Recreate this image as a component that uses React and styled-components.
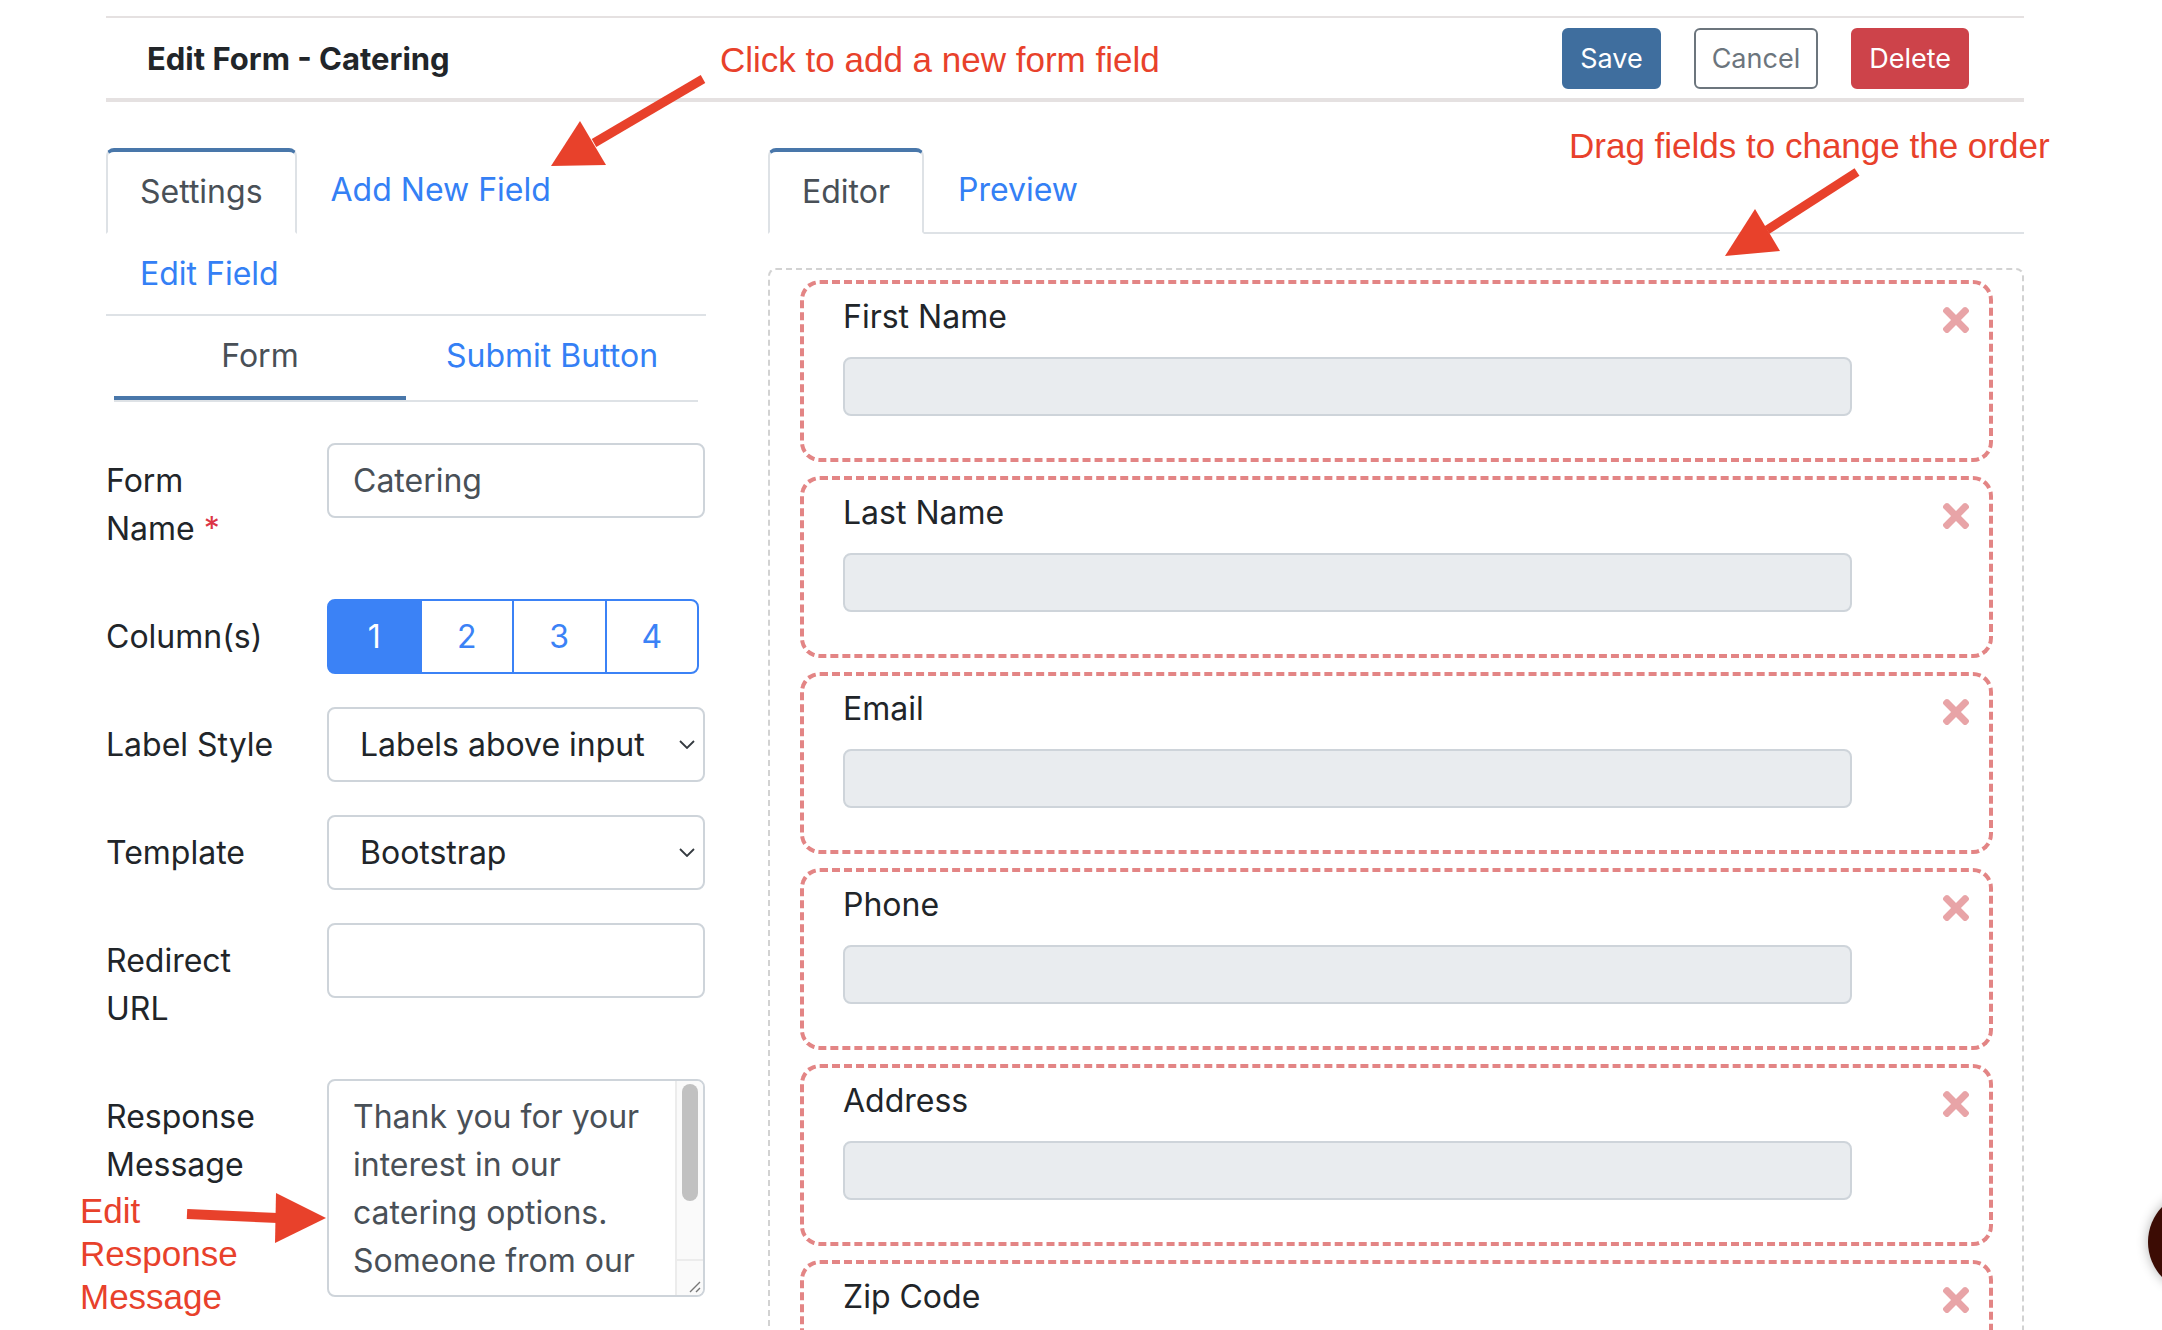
import React from "react";
import styled, { createGlobalStyle, css } from "styled-components";
import { FaTimes } from "react-icons/fa";

const GlobalStyle = createGlobalStyle`
  html, body {
    margin: 0;
    padding: 0;
    overflow: hidden;
    background: #fff;
  }
  body {
    font-family: Inter, "Noto Sans", sans-serif;
    color: #212529;
  }
  * {
    box-sizing: border-box;
  }
`;

const fields = ["First Name", "Last Name", "Email", "Phone", "Address", "Zip Code"];

const message =
  "Thank you for your interest in our catering options. Someone from our team will be in touch with you shortly to discuss the details of your event.";

const App = () => {
  return (
    <Page>
      <GlobalStyle />
      <Container>
        <Header>
          <Title>Edit Form - Catering</Title>
          <Actions>
            <Btn $variant="save">Save</Btn>
            <Btn $variant="cancel">Cancel</Btn>
            <Btn $variant="delete">Delete</Btn>
          </Actions>
        </Header>

        <Body>
          {/* Left: settings */}
          <section>
            <Tabs>
              <Tab $active>Settings</Tab>
              <Tab>Add New Field</Tab>
              <Tab>Edit Field</Tab>
            </Tabs>
            <SubTabs>
              <SubTab $active>Form</SubTab>
              <SubTab>Submit Button</SubTab>
            </SubTabs>

            <Form>
              <Row>
                <Label>
                  Form
                  <br />
                  Name <Required>*</Required>
                </Label>
                <Input defaultValue="Catering" />
              </Row>
              <Row>
                <Label>Column(s)</Label>
                <ColGroup>
                  {[1, 2, 3, 4].map((n) => (
                    <ColBtn key={n} $active={n === 1}>
                      {n}
                    </ColBtn>
                  ))}
                </ColGroup>
              </Row>
              <Row>
                <Label>Label Style</Label>
                <SelectWrap>
                  <Select defaultValue="above">
                    <option value="above">Labels above input</option>
                    <option value="left">Labels left of input</option>
                  </Select>
                  <Chevron />
                </SelectWrap>
              </Row>
              <Row>
                <Label>Template</Label>
                <SelectWrap>
                  <Select defaultValue="bootstrap">
                    <option value="bootstrap">Bootstrap</option>
                    <option value="plain">Plain</option>
                  </Select>
                  <Chevron />
                </SelectWrap>
              </Row>
              <Row>
                <Label>
                  Redirect
                  <br />
                  URL
                </Label>
                <Input defaultValue="" />
              </Row>
              <Row>
                <Label>
                  Response
                  <br />
                  Message
                </Label>
                <TextWrap>
                  <TextArea defaultValue={message} />
                  <ScrollTrack>
                    <ScrollThumb />
                    <ScrollCorner>
                      <svg width="16" height="16" viewBox="0 0 16 16">
                        <path d="M15 5L5 15M15 11l-4 4" stroke="#777" strokeWidth="1.4" fill="none" />
                      </svg>
                    </ScrollCorner>
                  </ScrollTrack>
                </TextWrap>
              </Row>
            </Form>
          </section>

          {/* Right: editor */}
          <section>
            <Tabs>
              <Tab $active>Editor</Tab>
              <Tab>Preview</Tab>
            </Tabs>
            <DropZone>
              {fields.map((f) => (
                <FieldCard key={f}>
                  <CardHead>
                    <FieldLabel>{f}</FieldLabel>
                    <Remove>
                      <FaTimes />
                    </Remove>
                  </CardHead>
                  <CardInput disabled />
                </FieldCard>
              ))}
            </DropZone>
          </section>
        </Body>
      </Container>

      {/* annotations */}
      <Note $left={720} $top={38}>Click to add a new form field</Note>
      <Note $left={1569} $top={124}>Drag fields to change the order</Note>
      <Note $left={80} $top={1189}>
        Edit
        <br />
        Response
        <br />
        Message
      </Note>
      <Arrows width="2162" height="1330" viewBox="0 0 2162 1330">
        <line x1="703" y1="79" x2="594" y2="143" stroke="#e8412b" strokeWidth="9" />
        <polygon points="551,166 580,121 606,165" fill="#e8412b" />
        <line x1="1857" y1="172" x2="1767" y2="230" stroke="#e8412b" strokeWidth="9" />
        <polygon points="1725,256 1755,209 1780,251" fill="#e8412b" />
        <line x1="187" y1="1214" x2="278" y2="1218" stroke="#e8412b" strokeWidth="10" />
        <polygon points="276,1193 326,1218 275,1243" fill="#e8412b" />
      </Arrows>

      <ChatBubble />
    </Page>
  );
};

const Chevron = () => (
  <ChevronIcon viewBox="0 0 16 9" width="16" height="9">
    <path d="M1 1l7 7 7-7" fill="none" stroke="#343a40" strokeWidth="1.8" />
  </ChevronIcon>
);

// Styled Components
const Page = styled.div`
  position: relative;
  width: 2162px;
  height: 1330px;
  overflow: hidden;
  padding: 16px 0 0 106px;
`;

const Container = styled.div`
  width: 1918px;
`;

const Header = styled.header`
  display: flex;
  align-items: center;
  justify-content: space-between;
  height: 86px;
  border-top: 2px solid #e5e1e1;
  border-bottom: 4px solid #e5e1e1;
  padding: 0 55px 0 41px;
`;

const Title = styled.h1`
  margin: 0;
  font-size: 31px;
  font-weight: 700;
  color: #212529;
`;

const Actions = styled.div`
  display: flex;
  gap: 33px;
`;

const variants = {
  save: css`
    background: #3f6e9e;
    border-color: #3f6e9e;
    color: #fff;
  `,
  cancel: css`
    background: #fff;
    border-color: #6c757d;
    color: #6c757d;
  `,
  delete: css`
    background: #cd434a;
    border-color: #cd434a;
    color: #fff;
  `,
};

const Btn = styled.button`
  height: 61px;
  padding: 0 16px;
  border: 2px solid;
  border-radius: 6px;
  font-family: Inter, sans-serif;
  font-size: 27px;
  cursor: pointer;
  ${(p) => variants[p.$variant]}
`;

const Body = styled.div`
  display: grid;
  grid-template-columns: 600px 1256px;
  column-gap: 62px;
  margin-top: 46px;
`;

const Tabs = styled.ul`
  list-style: none;
  margin: 0;
  padding: 0;
  display: flex;
  flex-wrap: wrap;
  border-bottom: 2px solid #dee2e6;
`;

const Tab = styled.li`
  margin-bottom: -2px;
  padding: 16px 32px;
  font-size: 32px;
  line-height: 48px;
  border: 2px solid transparent;
  border-radius: 8px 8px 0 0;
  color: #3480f5;
  cursor: pointer;

  ${(p) =>
    p.$active &&
    css`
      color: #495057;
      background: #fff;
      border-color: #dee2e6 #dee2e6 #fff;
      border-top: 4px solid #4977aa;
    `}
`;

const SubTabs = styled.div`
  display: flex;
  margin: 0 8px;
  border-bottom: 2px solid #dee2e6;
`;

const SubTab = styled.div`
  flex: 1;
  padding: 16px;
  text-align: center;
  font-size: 32px;
  line-height: 48px;
  border-bottom: 4px solid ${(p) => (p.$active ? "#4977aa" : "transparent")};
  color: ${(p) => (p.$active ? "#495057" : "#3480f5")};
  cursor: pointer;
`;

const Form = styled.div`
  padding-top: 41px;
`;

const Row = styled.div`
  display: grid;
  grid-template-columns: 190px 378px;
  column-gap: 31px;
  align-items: start;
  margin-bottom: 32px;
`;

const Label = styled.label`
  padding: 14px 0;
  font-size: 32px;
  line-height: 48px;
  color: #212529;
  white-space: nowrap;
`;

const Required = styled.span`
  color: #dc3545;
`;

const fieldBase = css`
  width: 100%;
  border: 2px solid #ced4da;
  border-radius: 8px;
  font-family: Inter, sans-serif;
  font-size: 32px;
  color: #495057;
  background: #fff;
  outline: none;
`;

const Input = styled.input`
  ${fieldBase}
  height: 75px;
  padding: 0 24px;
`;

const ColGroup = styled.div`
  display: flex;
  width: 372px;
  height: 75px;
`;

const ColBtn = styled.button`
  flex: 1;
  margin-left: -2px;
  border: 2px solid #3b82f6;
  background: ${(p) => (p.$active ? "#3b82f6" : "#fff")};
  color: ${(p) => (p.$active ? "#fff" : "#3b82f6")};
  font-family: Inter, sans-serif;
  font-size: 32px;
  cursor: pointer;

  &:first-child {
    margin-left: 0;
    border-radius: 8px 0 0 8px;
  }
  &:last-child {
    border-radius: 0 8px 8px 0;
  }
`;

const SelectWrap = styled.div`
  position: relative;
`;

const Select = styled.select`
  ${fieldBase}
  height: 75px;
  padding: 0 56px 0 31px;
  appearance: none;
  color: #212529;
`;

const ChevronIcon = styled.svg`
  position: absolute;
  right: 10px;
  top: 33px;
  pointer-events: none;
`;

const TextWrap = styled.div`
  position: relative;
  height: 218px;
`;

const TextArea = styled.textarea`
  ${fieldBase}
  display: block;
  height: 218px;
  padding: 12px 52px 12px 24px;
  line-height: 48px;
  resize: none;
  overflow: hidden;
`;

const ScrollTrack = styled.div`
  position: absolute;
  top: 2px;
  right: 2px;
  bottom: 2px;
  width: 28px;
  display: flex;
  flex-direction: column;
  justify-content: space-between;
  background: #fafafa;
  border-left: 2px solid #ececec;
  border-radius: 0 6px 6px 0;
`;

const ScrollThumb = styled.div`
  margin: 3px 0 0 5px;
  width: 16px;
  height: 117px;
  border-radius: 8px;
  background: #c1c1c1;
`;

const ScrollCorner = styled.div`
  display: flex;
  align-items: flex-end;
  justify-content: flex-end;
  height: 36px;
  border-top: 2px solid #ececec;
  padding: 0 2px 2px 0;
`;

const DropZone = styled.div`
  margin-top: 34px;
  border: 2px dashed #d2d2d2;
  border-radius: 8px;
  padding: 10px 29px 40px 30px;
`;

const FieldCard = styled.div`
  border: 4px dashed #e38585;
  border-radius: 20px;
  padding: 9px 14px 42px 39px;
  margin-bottom: 14px;
`;

const CardHead = styled.div`
  display: flex;
  align-items: center;
  justify-content: space-between;
  height: 48px;
`;

const FieldLabel = styled.span`
  font-size: 32px;
  line-height: 48px;
  color: #212529;
`;

const Remove = styled.span`
  display: flex;
  margin-top: 6px;
  font-size: 38px;
  color: #e8a4a7;
  cursor: pointer;
`;

const CardInput = styled.input`
  display: block;
  margin-top: 16px;
  width: 1009px;
  height: 59px;
  border: 2px solid #ced4da;
  border-radius: 8px;
  background: #e9ecef;
`;

const Note = styled.div`
  position: absolute;
  left: ${(p) => p.$left}px;
  top: ${(p) => p.$top}px;
  font-family: "Liberation Sans", Arial, sans-serif;
  font-size: 35px;
  line-height: 43px;
  color: #e8412b;
  white-space: nowrap;
`;

const Arrows = styled.svg`
  position: absolute;
  left: 0;
  top: 0;
  pointer-events: none;
`;

const ChatBubble = styled.div`
  position: absolute;
  left: 2148px;
  top: 1191px;
  width: 102px;
  height: 102px;
  border-radius: 50%;
  background: #3c0c04;
  box-shadow: 0 0 12px rgba(0, 0, 0, 0.3);
`;

export default App;
